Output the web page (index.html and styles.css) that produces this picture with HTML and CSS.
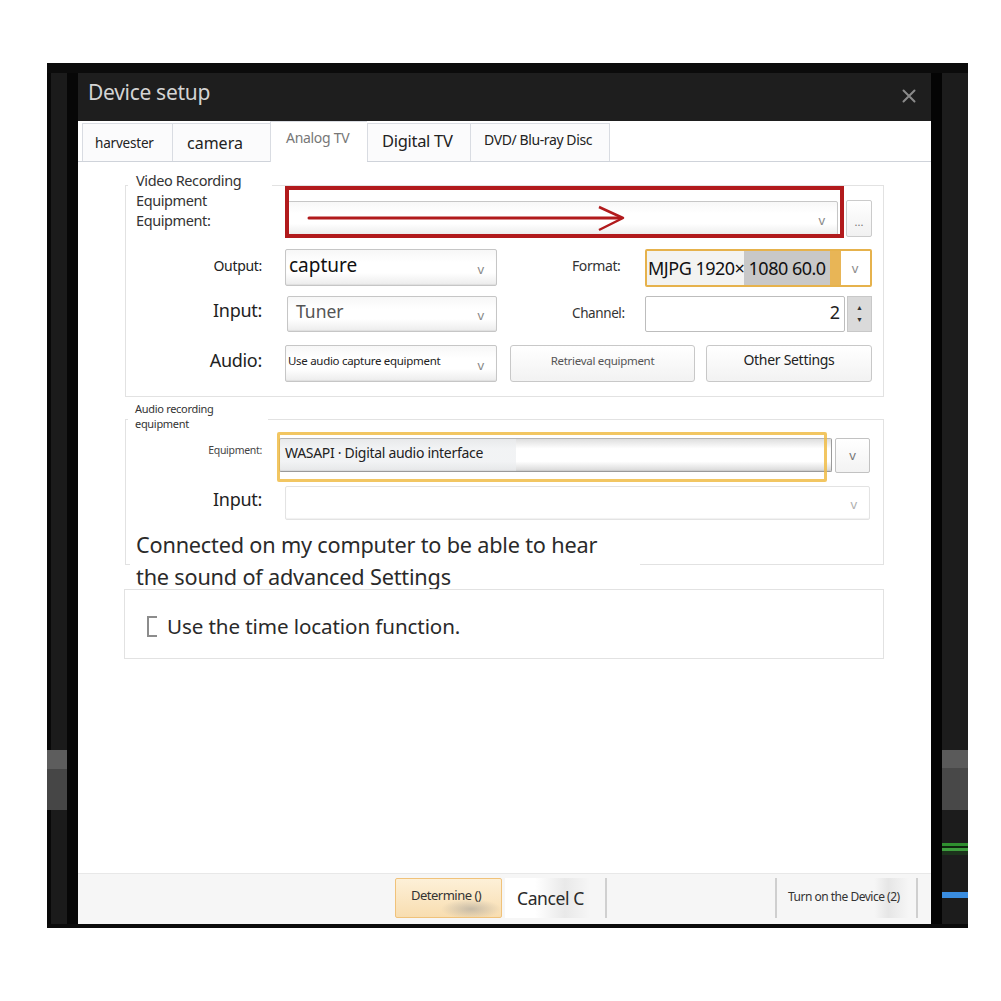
FILE: index.html
```html
<!DOCTYPE html>
<html lang="en">
<head>
<meta charset="utf-8">
<title>Device setup</title>
<link rel="stylesheet" href="styles.css">
</head>
<body>
<div class="frame">
  <div class="side side-left"><div class="band"></div></div>
  <div class="dialog">
    <div class="titlebar">
      <span class="title">Device setup</span>
      <svg class="close" width="14" height="14" viewBox="0 0 14 14"><path d="M1.5 1.5 L12.5 12.5 M12.5 1.5 L1.5 12.5" stroke="#8a8a8a" stroke-width="2" stroke-linecap="round"/></svg>
    </div>
    <div class="tabs">
      <div class="tab t-harv">harvester</div>
      <div class="tab t-cam">camera</div>
      <div class="tab t-analog active">Analog TV</div>
      <div class="tab t-dig">Digital TV</div>
      <div class="tab t-dvd">DVD/ Blu-ray Disc</div>
    </div>
    <div class="content">
      <div class="group g1">
        <div class="legend l1">Video Recording<br>Equipment<br>Equipment:</div>
        <div class="row r0">
          <div class="combo c-equip"><span class="ctext"></span><span class="chev">v</span></div>
          <div class="dots">...</div>
        </div>
        <div class="row r1">
          <div class="lbl s13">Output:</div>
          <div class="combo c-small"><span class="ctext t-capture">capture</span><span class="chev">v</span></div>
          <div class="lbl2 s13">Format:</div>
          <div class="format"><span class="fmt-text">MJPG 1920× 1080 60.0</span><span class="fmt-chev">v</span></div>
        </div>
        <div class="row r2">
          <div class="lbl s18">Input:</div>
          <div class="combo c-small c-tuner"><span class="ctext t-tuner">Tuner</span><span class="chev">v</span></div>
          <div class="lbl2 s12">Channel:</div>
          <div class="spin">2</div>
          <div class="spinbtn"><span>▲</span><span>▼</span></div>
        </div>
        <div class="row r3">
          <div class="lbl s18">Audio:</div>
          <div class="combo c-small"><span class="ctext t-use">Use audio capture equipment</span><span class="chev">v</span></div>
          <div class="btn b-retr">Retrieval equipment</div>
          <div class="btn b-other">Other Settings</div>
        </div>
        <svg class="annot" width="562" height="54" viewBox="0 0 562 54">
          <rect x="2" y="2" width="555" height="48" fill="none" stroke="#b11a1c" stroke-width="4"/>
          <path d="M24 32 L336 32" stroke="#b11a1c" stroke-width="3" stroke-linecap="round"/>
          <path d="M314 21 L338 32 L314 44" fill="none" stroke="#b11a1c" stroke-width="2.5" stroke-linejoin="round"/>
        </svg>
      </div>

      <div class="group g2">
        <div class="legend l2">Audio recording<br>equipment</div>
        <div class="row r4">
          <div class="lbl s10">Equipment:</div>
          <div class="combo c-wasapi"><span class="ctext t-wasapi">WASAPI · Digital audio interface</span></div>
          <div class="dropbtn">v</div>
        </div>
        <div class="row r5">
          <div class="lbl s18">Input:</div>
          <div class="combo c-input"><span class="ctext"></span><span class="chev light">v</span></div>
        </div>
        <div class="note">Connected on my computer to be able to hear<br>the sound of advanced Settings</div>
        <div class="highlight"></div>
      </div>

      <div class="group g3">
        <span class="check"></span>
        <span class="check-text">Use the time location function.</span>
      </div>
    </div>
    <div class="footer">
      <div class="fbtn f-det">Determine ()</div>
      <div class="fbtn f-cancel">Cancel C</div>
      <div class="fbtn f-turn">Turn on the Device (2)</div>
    </div>
  </div>
  <div class="side side-right">
    <div class="band"></div>
    <div class="green"></div>
    <div class="blue"></div>
  </div>
</div>
</body>
</html>
```
FILE: styles.css
```css
* { box-sizing: border-box; }
html, body { margin: 0; padding: 0; background: #ffffff; }
body { font-family: "Noto Sans", "Open Sans", sans-serif; color: #222; }

.frame {
  margin: 63px 0 0 47px;
  width: 921px;
  height: 865px;
  padding: 10px 0 4px;
  background: #0b0b0b;
  display: flex;
}

.side { flex: none; }
.side-left {
  width: 31px;
  background: linear-gradient(to right, #080808 0 4px, #1b1b1b 4px 20px, #070707 20px);
}
.side-left .band {
  margin-top: 677px;
  width: 20px;
  height: 60px;
  background: linear-gradient(#5d5d5d 0 19px, #464646 19px);
}
.side-right {
  width: 37px;
  background: linear-gradient(to right, #040404 0 11px, #1c1c1c 11px);
  display: flex;
  flex-direction: column;
}
.side-right .band {
  margin: 677px 0 0 11px;
  width: 26px;
  height: 60px;
  background: linear-gradient(#5a5a5a 0 18px, #484848 18px);
}
.side-right .green {
  margin: 33px 0 0 11px;
  width: 26px;
  height: 12px;
  background: linear-gradient(#2f8f2f 0 3px, #0e260e 3px 5px, #3d9d3d 5px 8px, #1c331c 8px);
}
.side-right .blue {
  margin: 37px 0 0 11px;
  width: 26px;
  height: 6px;
  background: #3a8de0;
}

.dialog {
  width: 853px;
  height: 851px;
  background: #ffffff;
  display: flex;
  flex-direction: column;
}

.titlebar {
  height: 48px;
  flex: none;
  background: #1e1e1e;
  display: flex;
  align-items: center;
  justify-content: space-between;
  padding: 0 15px 10px 10px;
}
.title {
  font-size: 21px;
  color: #d4d4d4;
  letter-spacing: -0.3px;
}
.close { display: block; margin-top: 8px; }

.tabs {
  height: 41px;
  flex: none;
  display: flex;
  align-items: flex-end;
  padding-left: 4px;
  border-bottom: 1px solid #cfd3da;
  background: #ffffff;
}
.tab {
  height: 38px;
  border: 1px solid #d9dce2;
  border-bottom: none;
  border-right: none;
  background: #fbfbfc;
  display: flex;
  align-items: center;
  color: #222;
  white-space: nowrap;
}
.t-harv { width: 90px; padding-left: 12px; font-size: 13.5px; letter-spacing: -0.2px; padding-top: 1px; }
.t-cam { width: 98px; padding-left: 14px; font-size: 16px; }
.t-analog {
  width: 97px; padding-left: 15px; font-size: 14px; color: #777;
  height: 41px; margin-bottom: -1px; background: #ffffff;
  padding-bottom: 10px; letter-spacing: -0.3px;
}
.t-dig { width: 103px; padding-left: 14px; font-size: 16.5px; letter-spacing: -0.3px; padding-bottom: 4px; }
.t-dvd { width: 140px; padding-left: 13px; font-size: 14px; letter-spacing: -0.4px; padding-bottom: 6px; border-right: 1px solid #d9dce2; }

.content {
  flex: 1;
  padding: 23px 47px 0;
}

.group {
  position: relative;
  border: 1px solid #e2e2e2;
}
.legend {
  position: absolute;
  background: #ffffff;
  color: #333;
}
.l1 {
  top: -16px;
  left: 2px;
  width: 144px;
  padding-left: 8px;
  font-size: 14.5px;
  line-height: 20px;
  letter-spacing: -0.4px;
}
.l2 {
  top: -19px;
  left: 2px;
  width: 140px;
  padding: 0 0 2px 7px;
  font-size: 11px;
  line-height: 15px;
  letter-spacing: -0.3px;
}

.g1 { padding: 15px 11px 14px 0; }
.row { display: flex; align-items: center; }
.r0 { height: 35px; padding-left: 161px; }
.r1 { height: 37px; margin-top: 13px; }
.r2 { height: 36px; margin-top: 10px; }
.r3 { height: 37px; margin-top: 13px; }

.lbl {
  width: 136px;
  text-align: right;
  color: #222;
  flex: none;
  letter-spacing: -0.3px;
  padding-bottom: 8px;
}
.lbl2 {
  width: 73px;
  margin-left: 75px;
  color: #333;
  flex: none;
  letter-spacing: -0.4px;
  padding-bottom: 2px;
}
.s10 { font-size: 10.5px; color: #444; padding-bottom: 10px; }
.s12 { font-size: 13.5px; }
.s13 { font-size: 14px; padding-bottom: 4px; }
.s18 { font-size: 18px; }

.combo {
  display: flex;
  align-items: center;
  justify-content: space-between;
  height: 100%;
  border: 1.5px solid #c6c6c6;
  border-radius: 2px;
  background: linear-gradient(#f7f7f7, #ffffff 35%, #ffffff 65%, #ececec);
  box-shadow: inset 0 -1px 1px rgba(0,0,0,0.06);
  flex: none;
}
.ctext { white-space: nowrap; }
.chev {
  font-size: 13px;
  color: #888;
  padding-right: 12px;
  padding-top: 2px;
}
.chev.light { color: #b0b0b0; }

.c-equip { width: 551px; }
.dots {
  width: 26px;
  height: 37px;
  margin-left: 8px;
  border: 1.5px solid #cbcbcb;
  border-radius: 2px;
  background: linear-gradient(#ffffff, #f1f1f1);
  font-size: 11px;
  color: #777;
  display: flex;
  align-items: flex-end;
  justify-content: center;
  padding-bottom: 7px;
  flex: none;
}
.c-small { width: 212px; margin-left: 23px; }
.c-tuner { margin-left: 25px; width: 210px; }
.t-capture { font-size: 19px; color: #111; padding-left: 3px; padding-bottom: 5px; }
.t-tuner { font-size: 17.5px; color: #555; padding-left: 8px; padding-bottom: 7px; }
.t-use { font-size: 11.5px; color: #222; padding-left: 2px; letter-spacing: -0.3px; padding-bottom: 6px; }

.format {
  width: 227px;
  height: 38px;
  border: 2px solid #e6b24c;
  border-radius: 2px;
  display: flex;
  flex: none;
}
.fmt-text {
  flex: 1;
  font-size: 18px;
  color: #111;
  padding-left: 1px;
  display: flex;
  align-items: center;
  white-space: nowrap;
  letter-spacing: -0.5px;
  background: linear-gradient(to right, #f3f3f1 0 97px, #c8c8c8 97px 183px, #e8b556 183px);
}
.fmt-chev {
  width: 28px;
  margin: 2px 1px 2px 0;
  background: #ffffff;
  color: #8a8a8a;
  font-size: 13px;
  display: flex;
  align-items: center;
  justify-content: center;
}

.spin {
  width: 200px;
  height: 36px;
  border: 1.5px solid #bdbdbd;
  border-radius: 2px;
  background: #ffffff;
  font-size: 18px;
  color: #222;
  text-align: right;
  padding-right: 4px;
  line-height: 31px;
  flex: none;
}
.spinbtn {
  width: 25px;
  height: 36px;
  margin-left: 2px;
  background: #dadada;
  border: 1px solid #c8c8c8;
  display: flex;
  flex-direction: column;
  align-items: center;
  justify-content: center;
  gap: 2px;
  font-size: 7px;
  color: #333;
  line-height: 10px;
  flex: none;
}

.btn {
  height: 37px;
  border: 1.5px solid #c8c8c8;
  border-radius: 3px;
  background: linear-gradient(#ffffff, #f2f2f2);
  display: flex;
  align-items: center;
  justify-content: center;
  white-space: nowrap;
  flex: none;
  padding-bottom: 6px;
}
.b-retr { width: 185px; margin-left: 13px; font-size: 11.5px; color: #555; letter-spacing: -0.3px; }
.b-other { width: 166px; margin-left: 11px; font-size: 14px; color: #222; letter-spacing: -0.3px; padding-bottom: 8px; }

.annot {
  position: absolute;
  left: 159px;
  top: 0;
}

.g2 {
  margin-top: 22px;
  height: 146px;
  padding-top: 18px;
}
.r4 { height: 34px; }
.r5 { height: 34px; margin-top: 14px; }
.c-wasapi {
  width: 553px;
  margin-left: 17px;
  border: 1.5px solid #9a9a9a;
  border-top-color: #b5b5b5;
  background: linear-gradient(to right, rgba(236,238,240,0.7) 0 236px, transparent 236px),
              linear-gradient(#dedede, #ffffff 30%, #ffffff 70%, #d8d8d8);
}
.t-wasapi { font-size: 14px; color: #222; padding-left: 5px; letter-spacing: -0.3px; padding-bottom: 5px; }
.dropbtn {
  width: 35px;
  height: 35px;
  margin-left: 3px;
  border: 1.5px solid #c2c2c2;
  border-radius: 2px;
  background: linear-gradient(#ffffff, #f3f3f3);
  font-size: 13px;
  color: #777;
  display: flex;
  align-items: center;
  justify-content: center;
  flex: none;
}
.c-input {
  width: 585px;
  margin-left: 23px;
  border-color: #e3e3e3;
  background: #ffffff;
}
.note {
  margin: 9px 0 0 4px;
  width: 510px;
  padding-left: 6px;
  background: #ffffff;
  font-size: 21.7px;
  line-height: 32px;
  color: #2a2a2a;
  letter-spacing: -0.2px;
}
.highlight {
  position: absolute;
  left: 151px;
  top: 12px;
  width: 550px;
  height: 50px;
  border: 3px solid rgba(240, 188, 70, 0.85);
  border-radius: 2px;
}

.g3 {
  margin-top: 24px;
  height: 70px;
  display: flex;
  align-items: center;
  padding-left: 22px;
  margin-left: -1px;
}
.check {
  width: 10px;
  height: 21px;
  border: 2px solid #8c8c8c;
  border-right: none;
  flex: none;
  margin-top: 5px;
}
.check-text {
  margin-left: 10px;
  font-size: 20.6px;
  color: #2a2a2a;
  letter-spacing: -0.1px;
  padding-top: 4px;
}

.footer {
  height: 51px;
  flex: none;
  background: #f6f6f6;
  border-top: 1px solid #e8e8e8;
  display: flex;
  align-items: flex-start;
  padding: 4px 13px 0 317px;
}
.fbtn {
  height: 40px;
  display: flex;
  align-items: center;
  white-space: nowrap;
  flex: none;
}
.f-det {
  width: 107px;
  border: 1.5px solid #f0c27a;
  border-radius: 2px;
  background: radial-gradient(ellipse 30px 10px at 75px 30px, rgba(150,150,150,0.5), transparent),
              linear-gradient(#fdf0d8, #f8ddb0);
  font-size: 13px;
  color: #333;
  padding: 0 0 6px 15px;
  letter-spacing: -0.5px;
}
.f-cancel {
  width: 102px;
  margin-left: 3px;
  font-size: 17.5px;
  color: #2a2a2a;
  padding-left: 12px;
  letter-spacing: -0.4px;
  background: linear-gradient(to right, #ffffff 30%, #e9e9e9 60%, #f6f6f6 85%);
  border-right: 2px solid #d0d0d0;
}
.f-turn {
  width: 143px;
  margin-left: auto;
  font-size: 12px;
  color: #333;
  padding: 0 0 4px 11px;
  letter-spacing: -0.5px;
  border-left: 2px solid #cfcfcf;
  border-right: 2px solid #cfcfcf;
  background: linear-gradient(to right, #f6f6f6 70%, #e6e6e6 80%, #f6f6f6 95%);
}
```
